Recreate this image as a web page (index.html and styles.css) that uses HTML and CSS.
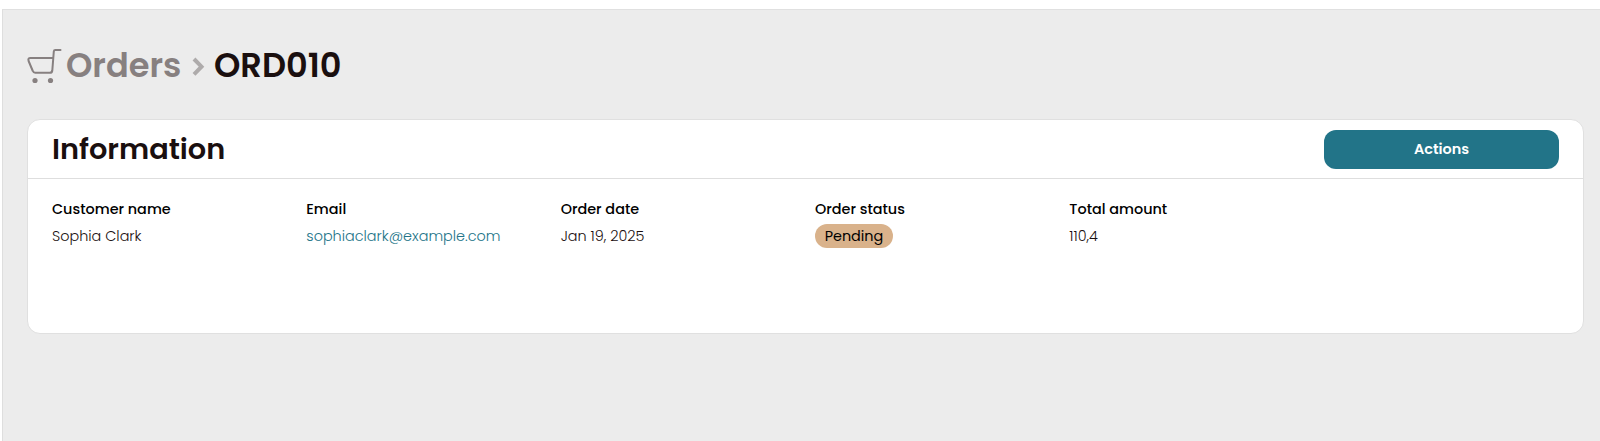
FILE: index.html
```html
<!DOCTYPE html>
<html lang="en">
<head>
	<meta charset="UTF-8">
	<title>Orders - ORD010</title>
	<link rel="stylesheet" href="styles.css">
</head>
<body>
	<div id="main">
		<h1 class="breadcrumb">
			<svg class="cart" width="36" height="36" viewBox="0 0 36 36" fill="none">
				<path d="M33.5 2H28.2Q27 2 26.8 3.5L25.3 22.5Q25 24.8 22.8 24.8H8.2Q6.5 24.8 5.8 23L1.6 13Q0.6 10 3.5 10H26" stroke="#878080" stroke-width="2" stroke-linecap="round" stroke-linejoin="round"/>
				<circle cx="8" cy="32.5" r="2.6" fill="#878080"/>
				<circle cx="23.5" cy="32.5" r="2.6" fill="#878080"/>
			</svg>
			<a class="parent" href="#">Orders</a>
			<svg class="arrow" width="13" height="20" viewBox="0 0 13 20" fill="none">
				<path d="M2 2L9.5 9.700L2 17.4" stroke="#aeabab" stroke-width="4"/>
			</svg>
			<span class="current">ORD010</span>
		</h1>
		<div class="card">
			<div class="card-header">
				<h2>Information</h2>
				<button type="button">Actions</button>
			</div>
			<ul class="fields">
				<li><b>Customer name</b><span>Sophia Clark</span></li>
				<li><b>Email</b><a href="#">sophiaclark@example.com</a></li>
				<li><b>Order date</b><span>Jan 19, 2025</span></li>
				<li><b>Order status</b><span class="status">Pending</span></li>
				<li><b>Total amount</b><span>110,4</span></li>
			</ul>
		</div>
	</div>
</body>
</html>
```

FILE: styles.css
```css
*{box-sizing:border-box;}
body{margin:0;padding:9px 0 0 2px;background:#fff;color:#1a0f0f;font-family:Poppins,Inter,sans-serif;overflow:hidden;}
a{text-decoration:none;}
#main{height:432px;padding:30px 16px 0 24px;background:#ececec;border-top:1px solid #e0e0e0;border-left:1px solid #dedede;}

.breadcrumb{display:flex;align-items:center;height:52px;margin:0 0 27px;font-size:33.6px;line-height:52px;font-weight:600;white-space:nowrap;}
.breadcrumb .cart{flex:none;margin:0 3px 1px 0;}
.breadcrumb .parent{width:115px;color:#878080;}
.breadcrumb .arrow{flex:none;margin:1px 9px 0 11px;}

.card{height:215px;background:#fff;border:1px solid #e0e0e0;border-radius:13px;}
.card-header{display:flex;align-items:center;justify-content:space-between;height:59px;padding:0 24px;border-bottom:1px solid #dedede;}
.card-header h2{margin:0;font-size:28.8px;line-height:40px;font-weight:600;}
.card-header button{width:235px;height:39px;padding:0;border:0;border-radius:12px;background:#227488;color:#fff;font-family:inherit;font-size:14.4px;font-weight:600;}

.fields{display:grid;grid-template-columns:repeat(6,1fr);margin:0;padding:18px 5px 0 24px;list-style:none;font-size:14.4px;line-height:24px;white-space:nowrap;}
.fields b{display:block;margin-bottom:3px;font-weight:500;color:#000;}
.fields a,.fields span{display:inline-block;font-weight:300;}
.fields a{color:#227488;}
.fields .status{width:78px;border-radius:12px;background:#d9b28b;color:#000;text-align:center;font-weight:400;}
```
